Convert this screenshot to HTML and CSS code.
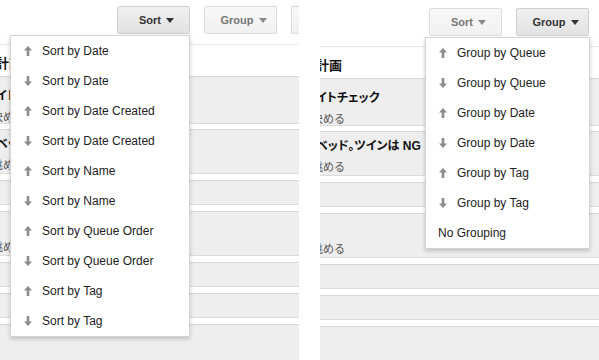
FILE: index.html
```html
<!DOCTYPE html>
<html lang="ja">
<head>
    <meta charset="UTF-8">
    <meta name="viewport" content="width=device-width, initial-scale=1.0">
    <title>Task list - sort and group menus</title>
    <link rel="stylesheet" href="styles.css">
</head>
<body>
    <div class="shot">
        <!-- left crop: sort menu open -->
        <div class="pane pane-left">
            <div class="page">
                <div class="toolbar">
                    <div class="menu-wrap">
                        <button class="btn active">Sort <svg class="caret" viewBox="0 0 8 5"><path d="M0 0H8L4 5Z"/></svg></button>
                        <ul class="dropdown sort-menu">
                            <li><svg class="arrow" viewBox="0 0 8 10"><path d="M4 0L8 4.5H5.3V10H2.7V4.5H0Z"/></svg>Sort by Date</li>
                            <li><svg class="arrow" viewBox="0 0 8 10"><path d="M4 10L8 5.5H5.3V0H2.7V5.5H0Z"/></svg>Sort by Date</li>
                            <li><svg class="arrow" viewBox="0 0 8 10"><path d="M4 0L8 4.5H5.3V10H2.7V4.5H0Z"/></svg>Sort by Date Created</li>
                            <li><svg class="arrow" viewBox="0 0 8 10"><path d="M4 10L8 5.5H5.3V0H2.7V5.5H0Z"/></svg>Sort by Date Created</li>
                            <li><svg class="arrow" viewBox="0 0 8 10"><path d="M4 0L8 4.5H5.3V10H2.7V4.5H0Z"/></svg>Sort by Name</li>
                            <li><svg class="arrow" viewBox="0 0 8 10"><path d="M4 10L8 5.5H5.3V0H2.7V5.5H0Z"/></svg>Sort by Name</li>
                            <li><svg class="arrow" viewBox="0 0 8 10"><path d="M4 0L8 4.5H5.3V10H2.7V4.5H0Z"/></svg>Sort by Queue Order</li>
                            <li><svg class="arrow" viewBox="0 0 8 10"><path d="M4 10L8 5.5H5.3V0H2.7V5.5H0Z"/></svg>Sort by Queue Order</li>
                            <li><svg class="arrow" viewBox="0 0 8 10"><path d="M4 0L8 4.5H5.3V10H2.7V4.5H0Z"/></svg>Sort by Tag</li>
                            <li><svg class="arrow" viewBox="0 0 8 10"><path d="M4 10L8 5.5H5.3V0H2.7V5.5H0Z"/></svg>Sort by Tag</li>
                        </ul>
                    </div>
                    <div class="menu-wrap">
                        <button class="btn">Group <svg class="caret" viewBox="0 0 8 5"><path d="M0 0H8L4 5Z"/></svg></button>
                    </div>
                    <div class="menu-wrap">
                        <button class="btn">View <svg class="caret" viewBox="0 0 8 5"><path d="M0 0H8L4 5Z"/></svg></button>
                    </div>
                </div>
                <h2 class="heading"><span class="lead">旅行</span>計画</h2>
                <ul class="tasks">
                    <li class="task">
                        <div class="title"><span class="lead">予約サ</span>イトチェック</div>
                        <div class="note"><span class="lead">日程を</span>決める</div>
                    </li>
                    <li class="task">
                        <div class="title"><span class="lead">ダブル</span>ベッド。ツインは NG</div>
                        <div class="note"><span class="lead">夜景を</span>眺める</div>
                    </li>
                    <li class="task empty"></li>
                    <li class="task">
                        <div class="title"><span class="lead">朝食</span></div>
                        <div class="note"><span class="lead">海を</span>眺める</div>
                    </li>
                    <li class="task empty"></li>
                    <li class="task empty"></li>
                    <li class="task">
                        <div class="title"><span class="lead">帰路</span></div>
                        <div class="note"><span class="lead">駅</span></div>
                    </li>
                </ul>
            </div>
        </div>

        <!-- right crop: group menu open -->
        <div class="pane pane-right">
            <div class="page">
                <div class="toolbar">
                    <div class="menu-wrap">
                        <button class="btn">Sort <svg class="caret" viewBox="0 0 8 5"><path d="M0 0H8L4 5Z"/></svg></button>
                    </div>
                    <div class="menu-wrap">
                        <button class="btn active">Group <svg class="caret" viewBox="0 0 8 5"><path d="M0 0H8L4 5Z"/></svg></button>
                        <ul class="dropdown group-menu">
                            <li><svg class="arrow" viewBox="0 0 8 10"><path d="M4 0L8 4.5H5.3V10H2.7V4.5H0Z"/></svg>Group by Queue</li>
                            <li><svg class="arrow" viewBox="0 0 8 10"><path d="M4 10L8 5.5H5.3V0H2.7V5.5H0Z"/></svg>Group by Queue</li>
                            <li><svg class="arrow" viewBox="0 0 8 10"><path d="M4 0L8 4.5H5.3V10H2.7V4.5H0Z"/></svg>Group by Date</li>
                            <li><svg class="arrow" viewBox="0 0 8 10"><path d="M4 10L8 5.5H5.3V0H2.7V5.5H0Z"/></svg>Group by Date</li>
                            <li><svg class="arrow" viewBox="0 0 8 10"><path d="M4 0L8 4.5H5.3V10H2.7V4.5H0Z"/></svg>Group by Tag</li>
                            <li><svg class="arrow" viewBox="0 0 8 10"><path d="M4 10L8 5.5H5.3V0H2.7V5.5H0Z"/></svg>Group by Tag</li>
                            <li class="plain">No Grouping</li>
                        </ul>
                    </div>
                    <div class="menu-wrap">
                        <button class="btn">View <svg class="caret" viewBox="0 0 8 5"><path d="M0 0H8L4 5Z"/></svg></button>
                    </div>
                </div>
                <h2 class="heading"><span class="lead">旅行</span>計画</h2>
                <ul class="tasks">
                    <li class="task">
                        <div class="title"><span class="lead">予約サ</span>イトチェック</div>
                        <div class="note"><span class="lead">日程を</span>決める</div>
                    </li>
                    <li class="task">
                        <div class="title"><span class="lead">ダブル</span>ベッド。ツインは NG</div>
                        <div class="note"><span class="lead">夜景を</span>眺める</div>
                    </li>
                    <li class="task empty"></li>
                    <li class="task">
                        <div class="title"><span class="lead">朝食</span></div>
                        <div class="note"><span class="lead">海を</span>眺める</div>
                    </li>
                    <li class="task empty"></li>
                    <li class="task empty"></li>
                    <li class="task">
                        <div class="title"><span class="lead">帰路</span></div>
                        <div class="note"><span class="lead">駅</span></div>
                    </li>
                </ul>
            </div>
        </div>
    </div>
</body>
</html>
```

FILE: styles.css
```css
body {
    margin: 0;
    background: #fff;
    font-family: 'Liberation Sans', 'Noto Sans CJK JP', sans-serif;
    color: #222;
}
.shot {
    display: flex;
    gap: 21px;
    height: 360px;
    overflow: hidden;
}
.pane {
    position: relative;
    height: 360px;
    overflow: hidden;
}
.pane-left {
    width: 299px;
}
.pane-right {
    width: 279px;
}
.page {
    width: 760px;
    margin-left: -44px;
}
.pane-left .toolbar {
    padding-left: 161px;
}
.pane-right .page {
    margin-left: -44px;
    margin-top: 2px;
}
.pane-right .toolbar {
    padding-left: 153px;
}
.toolbar {
    display: flex;
    gap: 14px;
    height: 45px;
    padding-top: 6px;
    box-sizing: border-box;
    border-bottom: 1px solid #e6e6e6;
}
.menu-wrap {
    position: relative;
}
.btn {
    display: flex;
    align-items: center;
    justify-content: center;
    gap: 5px;
    width: 73px;
    height: 28px;
    padding: 0 0 0 6px;
    border: 1px solid #dcdcdc;
    border-radius: 2px;
    background: linear-gradient(#f8f8f8, #f1f1f1);
    color: #777;
    font-family: 'Liberation Sans', sans-serif;
    font-size: 11px;
    font-weight: bold;
}
.btn .caret {
    width: 8px;
    height: 5px;
    fill: #8a8a8a;
}
.btn.active {
    border-color: #cfcfcf;
    background: linear-gradient(#f0f0f0, #e2e2e2);
    color: #333;
}
.btn.active .caret {
    fill: #333;
}
.dropdown {
    position: absolute;
    top: 29px;
    right: 0;
    z-index: 5;
    margin: 0;
    padding: 0;
    list-style: none;
    background: #fff;
    border: 1px solid #d4d4d4;
    box-shadow: 0 2px 4px rgba(0, 0, 0, 0.2);
}
.sort-menu {
    width: 178px;
}
.group-menu {
    width: 163px;
    right: -1px;
}
.dropdown li {
    display: flex;
    align-items: center;
    height: 30px;
    padding-left: 13px;
    font-size: 12px;
    color: #222;
    white-space: nowrap;
}
.dropdown .arrow {
    width: 8px;
    height: 10px;
    margin-right: 10px;
    fill: #8c8c8c;
}
.dropdown li.plain {
    padding-left: 12px;
}
.lead {
    display: inline-block;
    width: 40px;
    text-align: right;
}
.note .lead {
    width: 36px;
}
.heading {
    margin: 0;
    padding: 10px 0 4px;
    font-size: 13px;
    line-height: 17px;
    font-weight: bold;
    color: #111;
    font-feature-settings: "palt";
}
.tasks {
    margin: 0;
    padding: 0;
    list-style: none;
}
.task {
    margin-bottom: 6px;
    padding: 5px 0 2px;
    background: #eee;
    border-top: 1px solid #d6d6d6;
    border-bottom: 1px solid #dcdcdc;
}
.task:first-child {
    padding: 10px 0 0;
    margin-bottom: 5px;
}
.task.empty {
    height: 23px;
    padding: 0;
    box-sizing: content-box;
}
.title {
    font-size: 12px;
    line-height: 18px;
    font-weight: bold;
    color: #111;
    font-feature-settings: "palt";
    white-space: nowrap;
}
.note {
    margin-top: 6px;
    font-size: 11px;
    line-height: 12px;
    color: #555;
    white-space: nowrap;
}
```
